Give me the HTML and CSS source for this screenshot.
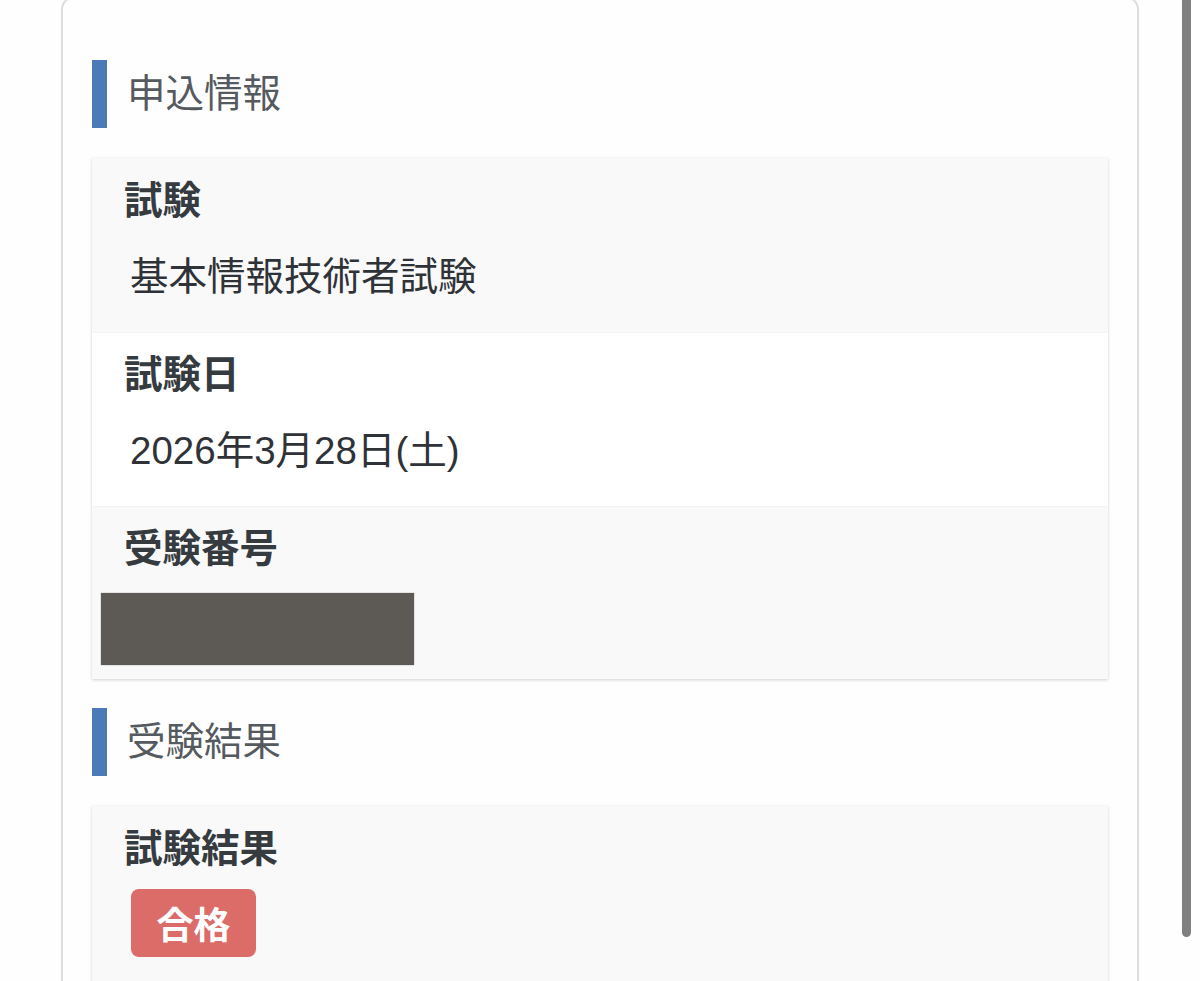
FILE: index.html
```html
<!DOCTYPE html>
<html lang="ja">
<head>
<meta charset="utf-8">
<title>申込情報</title>
<link rel="stylesheet" href="styles.css">
</head>
<body>
<div class="page">
  <div class="panel">
    <h2 class="section-title">申込情報</h2>
    <div class="card">
      <div class="row odd">
        <div class="label">試験</div>
        <div class="value">基本情報技術者試験</div>
      </div>
      <div class="row">
        <div class="label">試験日</div>
        <div class="value">2026年3月28日(土)</div>
      </div>
      <div class="row odd last">
        <div class="label">受験番号</div>
        <div class="redacted"></div>
      </div>
    </div>
    <h2 class="section-title">受験結果</h2>
    <div class="card">
      <div class="row odd tall">
        <div class="label">試験結果</div>
        <div class="badge-wrap"><span class="badge">合格</span></div>
      </div>
    </div>
  </div>
  <div class="scrollbar"></div>
</div>
</body>
</html>
```

FILE: styles.css
```css
html, body {
  margin: 0;
  padding: 0;
  background: #fefefe;
  height: 100%;
  overflow: hidden;
}
body {
  font-family: "Liberation Sans", "Noto Sans CJK JP", sans-serif;
  color: #333;
}
.page {
  position: relative;
  height: 981px;
  overflow: hidden;
}
.panel {
  margin: -3px 0 0 61px;
  height: 1100px;
  border: 2px solid #dedede;
  border-radius: 12px;
  background: #fefefe;
  padding: 0 29px;
  box-sizing: content-box;
  width: 1016px;
}
.section-title {
  margin: 61px 0 30px;
  height: 68px;
  display: flex;
  align-items: center;
  border-left: 15px solid #4a7bb7;
  padding-left: 20px;
  font-size: 38.5px;
  font-weight: 400;
  color: #555a5e;
  line-height: 1;
}
.card + .section-title {
  margin-top: 29px;
}
.card {
  background: #fff;
  box-shadow: 0 1px 3px rgba(0, 0, 0, 0.18);
}
.row {
  padding: 17px 32px 29px 32px;
  background: #fff;
}
.row + .row {
  box-shadow: inset 0 1px 0 #f2f2f2;
}
.row.odd {
  background: #f9f9f9;
}
.label {
  font-size: 38.5px;
  font-weight: 700;
  line-height: 52px;
  color: #363b40;
}
.value {
  margin-top: 24px;
  padding-left: 6px;
  font-size: 38.5px;
  line-height: 52px;
  color: #2f3338;
}
.redacted {
  margin: 18px 0 0 -23px;
  width: 313px;
  height: 72px;
  background: #5d5955;
  box-shadow: 0 0 1px rgba(0,0,0,0.5);
}
.row.last {
  padding-bottom: 14px;
}
.badge-wrap {
  margin-top: 14px;
  padding-left: 7px;
}
.badge {
  display: inline-flex;
  align-items: center;
  justify-content: center;
  width: 125px;
  height: 68px;
  border-radius: 8px;
  background: #db6c68;
  color: #fff;
  font-size: 37px;
  font-weight: 700;
}
.row.tall {
  padding-bottom: 60px;
}
.scrollbar {
  position: absolute;
  top: 0;
  left: 1182px;
  width: 9px;
  height: 937px;
  background: #808080;
  border-radius: 0 0 5px 5px;
}
```
